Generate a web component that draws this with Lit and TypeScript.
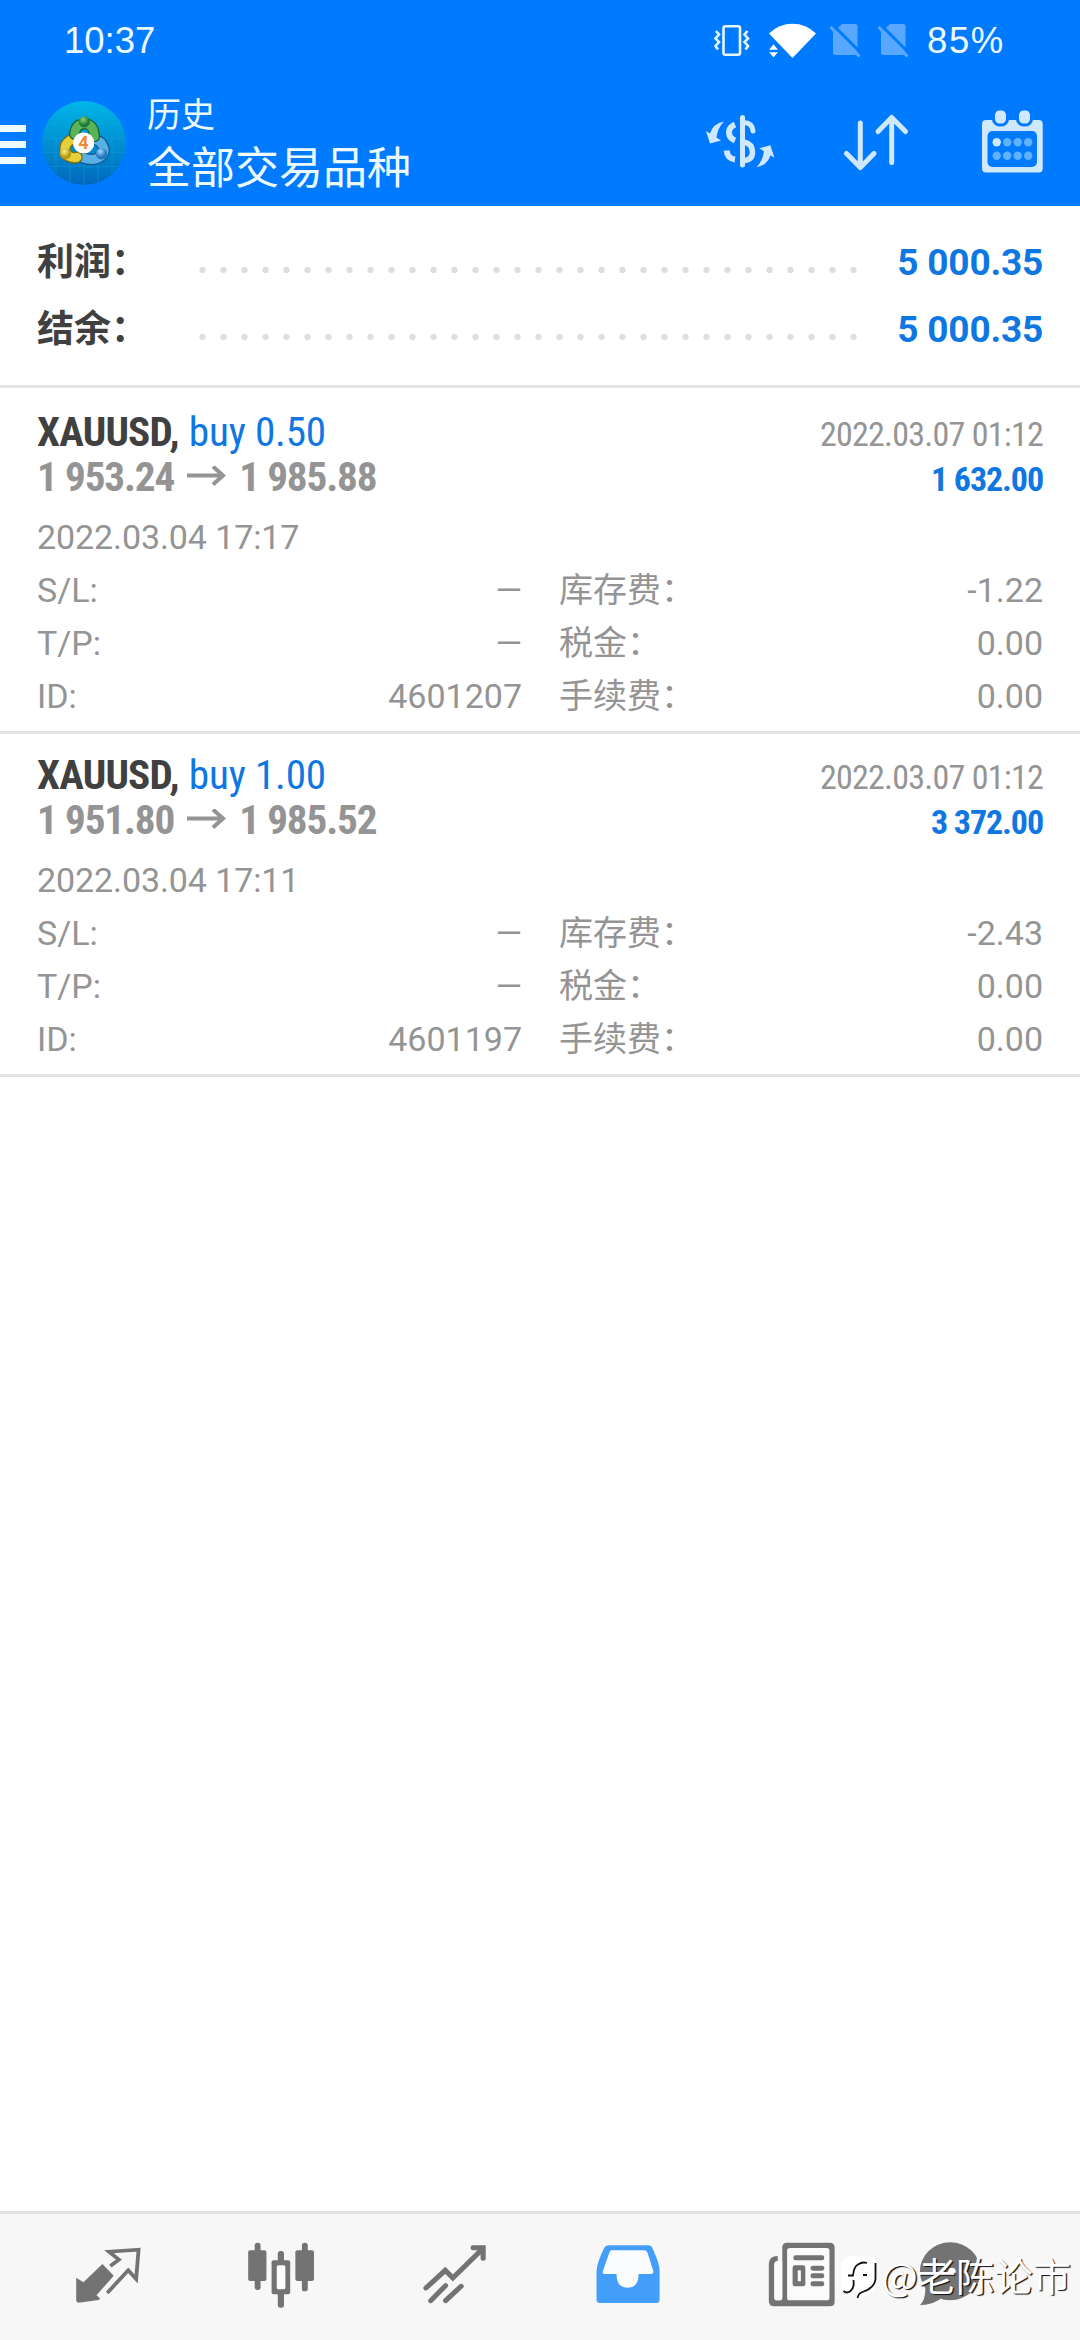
import { LitElement, html, css } from "lit";
import { customElement } from "lit/decorators.js";

interface Deal {
  symbol: string;
  side: string;
  open: string;
  close: string;
  closedAt: string;
  openedAt: string;
  profit: string;
  id: string;
  swap: string;
}

const DEALS: Deal[] = [
  { symbol: "XAUUSD,", side: "buy 0.50", open: "1 953.24", close: "1 985.88", closedAt: "2022.03.07 01:12", openedAt: "2022.03.04 17:17", profit: "1 632.00", id: "4601207", swap: "-1.22" },
  { symbol: "XAUUSD,", side: "buy 1.00", open: "1 951.80", close: "1 985.52", closedAt: "2022.03.07 01:12", openedAt: "2022.03.04 17:11", profit: "3 372.00", id: "4601197", swap: "-2.43" },
];

const statusIcons = html`
  <svg width="200" height="40" viewBox="710 20 200 40">
    <g fill="none" stroke="#e6f6ff" stroke-width="2.6">
      <rect x="723.5" y="26.3" width="16.5" height="28.4" rx="2"/>
      <path d="M716 31l3 3.500-3.500 4 3.500 3.500-3.500 4 2.500 3.500M747.500 31l-3 3.500 3.500 4-3.500 3.500 3.500 4-2.500 3.500"/>
    </g>
    <path fill="#fff" d="M769 33.5q10-9.7 23.5-9.7t23.5 9.7L792.5 58z"/>
    <path fill="#fff" stroke="#007aff" stroke-width="1.5" d="M767.5 50.5l6-7.5 6 7.5zM767.5 51.5h12l-6 7z"/>
    <g id="sim">
      <path fill="#58a8ff" d="M842 24h13.5q2 0 2 2v27q0 2-2 2h-20.5q-2 0-2-2V32z"/>
      <path stroke="#007aff" stroke-width="3" d="M832 24l30 30"/>
      <path stroke="#58a8ff" stroke-width="3" d="M830.5 27l29 29.500"/>
    </g>
    <use href="#sim" x="48"/>
  </svg>`;

const avatar = html`
  <svg class="avatar" width="84" height="84" viewBox="42 100.7 84 84">
    <defs>
      <linearGradient id="sky" x1="0" y1="0" x2="0" y2="1"><stop offset="0" stop-color="#00b7e8"/><stop offset="0.5" stop-color="#0090d2"/><stop offset="1" stop-color="#0068bb"/></linearGradient>
      <radialGradient id="gr" cx="0.4" cy="0.3"><stop offset="0" stop-color="#8fd07a"/><stop offset="1" stop-color="#1c7a35"/></radialGradient>
      <radialGradient id="ye" cx="0.4" cy="0.3"><stop offset="0" stop-color="#fff08a"/><stop offset="1" stop-color="#b89a10"/></radialGradient>
      <radialGradient id="bl" cx="0.4" cy="0.3"><stop offset="0" stop-color="#a5dcff"/><stop offset="1" stop-color="#2278bd"/></radialGradient>
    </defs>
    <circle cx="84" cy="142.7" r="42" fill="url(#sky)"/>
    <path d="M56 112v61M70 104v78M84 102v82M98 104v78M112 112v61M46 124h76M43 138h82M43 152h82M49 166h70" stroke="#1fa6dc" stroke-width="0.7" opacity="0.5"/>
    <g fill="none" stroke-linecap="round">
      <path d="M84 158q10 3 17-2 5-5 2-10-2-5-6-6" stroke="#17598f" stroke-width="11.500"/>
      <path d="M84 158q10 3 17-2 5-5 2-10-2-5-6-6" stroke="#58b0e6" stroke-width="9"/>
      <path d="M72 139q-6 3-7 8-1 7 4 9 4 2 8 1" stroke="#7b6b10" stroke-width="11.500"/>
      <path d="M72 139q-6 3-7 8-1 7 4 9 4 2 8 1" stroke="#e5d03c" stroke-width="9"/>
      <path d="M74.500 134q1-10 9.500-10.500 10 0 10.500 13" stroke="#155f2c" stroke-width="11"/>
      <path d="M74.500 134q1-10 9.500-10.500 10 0 10.500 13" stroke="#5ab457" stroke-width="8.500"/>
    </g>
    <circle cx="84.3" cy="121.5" r="5.6" fill="url(#gr)"/>
    <circle cx="65.5" cy="153.5" r="5.6" fill="url(#ye)"/>
    <circle cx="101.5" cy="153.5" r="5.6" fill="url(#bl)"/>
    <circle cx="83.7" cy="142.7" r="10.6" fill="#fff"/>
    <text x="83.5" y="149.200" text-anchor="middle" font-size="18" font-weight="700" fill="#f08a30">4</text>
  </svg>`;

const dollarIcon = html`
  <svg width="72" height="60" viewBox="704 112 72 60">
    <g fill="none" stroke="#cfe8fb">
      <path d="M742.5 117.5V165" stroke-width="5" stroke-linecap="round"/>
      <path d="M744 122.5q8.5.5 9 8.5" stroke-width="5" stroke-linecap="round"/>
      <path d="M735 124.5q-6 2.5-6 8t6 8" stroke-width="6"/>
      <path d="M726.5 150.5q1 8 8.5 9" stroke-width="6"/>
      <path d="M744 142q8.5 2 8.5 10t-8.5 8.5" stroke-width="5.5"/>
    </g>
    <path id="curl" fill="#cfe8fb" d="M706 131l4 12.5 11-3-4.5-3q1-9.5 7.5-16-11 2-14 12z"/>
    <use href="#curl" transform="rotate(180 740.2 144.4)"/>
  </svg>`;

const sortIcon = html`
  <svg class="sort" width="68" height="60" viewBox="842 112 68 60">
    <path d="M860.3 123v44.5M846.5 153.5l13.8 14 13.7-14M891.7 162.5V118M878 131.500l13.7-14 13.8 14" fill="none" stroke="#cfe8fb" stroke-width="5" stroke-linecap="round" stroke-linejoin="round"/>
  </svg>`;

const calendarIcon = html`
  <svg width="65" height="66" viewBox="980 109 65 66">
    <rect x="982" y="120" width="60.7" height="52.6" rx="4" fill="#cfe8fb"/>
    <rect x="987.5" y="131" width="49.5" height="36" rx="5" fill="#007aff"/>
    <g fill="#cfe8fb" stroke="#007aff" stroke-width="3">
      <rect x="993.5" y="109" width="14" height="16" rx="6"/><rect x="1017.5" y="109" width="14" height="16" rx="6"/>
    </g>
    <g fill="#5fb2ff">
      <circle cx="996.7" cy="142.3" r="4.2" fill="#cfe8fb"/><circle cx="1007.2" cy="142.3" r="4.2"/><circle cx="1017.7" cy="142.3" r="4.2"/><circle cx="1028.2" cy="142.3" r="4.2"/>
      <circle cx="996.7" cy="155.7" r="4.2"/><circle cx="1007.2" cy="155.7" r="4.2"/><circle cx="1017.7" cy="155.7" r="4.2"/><circle cx="1028.2" cy="155.7" r="4.2"/>
    </g>
  </svg>`;

const tab = (x: number, art: unknown, last = false) => html`
  <div class="tab ${last ? "last" : ""}">
    <svg width="75.8" height="73.3" viewBox="${x} 110 220 220" preserveAspectRatio="none">${art}</svg>
  </div>`;

/* Tab artwork is wrapped in its own svg so the fragments parse in the SVG namespace. */
const quotes = html`<svg x="202" y="110" width="220" height="220" viewBox="202 110 220 220" fill="#737373">
  <path d="M220 232l21 14 55-55 33 35-50 59 11 10-5 4-58 8q-7 0-7-7z"/>
  <path d="M319 197l25-19-29-24 86-6-7 88-23-26-61 68" fill="none" stroke="#737373" stroke-width="11"/></svg>`;
const charts = html`<svg x="703" y="110" width="220" height="220" viewBox="703 110 220 220" fill="#737373">
  <rect x="718" y="150" width="53" height="92" rx="6"/><rect x="737" y="127" width="17" height="142" rx="8"/>
  <rect x="855" y="150" width="54" height="92" rx="6"/><rect x="874" y="127" width="17" height="146" rx="8"/>
  <rect x="804" y="152" width="18" height="170" rx="8"/><rect x="786" y="180" width="54" height="102" rx="6"/>
  <rect x="801" y="195" width="25" height="72" rx="5" fill="#fcfcfc"/></svg>`;
const trade = html`<svg x="1206" y="110" width="220" height="220" viewBox="1206 110 220 220">
  <path d="M1232 263l56-53 22 23 86-87M1369 142.5h29V174M1246 301l43-45M1289 301l45-43" fill="none" stroke="#737373" stroke-width="15" stroke-linecap="round"/></svg>`;
const history = html`<svg x="143" y="110" width="220" height="220" viewBox="143 110 220 220">
  <path fill="#439dfb" d="M196 135h116q8 0 13 10 20 45 20 67v87q0 9-10 9H172q-10 0-10-9v-87q2-27 22-69 4-8 12-8z"/>
  <path fill="#fbfcfd" d="M207 150h92q8 0 11 7l17 56q1 8-7 8h-36q0 41-32 41t-32-41h-34q-8 0-6-8l19-56q2-7 8-7z"/></svg>`;
const news = html`<svg x="650" y="110" width="220" height="220" viewBox="650 110 220 220" fill="#737373">
  <path d="M690 167v15q-10 0-10 12v98q0 8 8 8h7q8 0 8-8V141q0-14 14-14h124q14 0 14 14v163q0 14-14 14H680q-16 0-16-16V190q0-23 26-23z"/>
  <path fill="#fbfbfb" d="M690 182q-10 0-10 12v98q0 8 8 8h7q8 0 8-8V182z"/>
  <rect x="717" y="143" width="123" height="157" rx="8" fill="#fbfbfb"/>
  <rect x="735" y="165" width="90" height="15" rx="7"/><rect x="733" y="195" width="37" height="63" rx="7"/>
  <rect x="748" y="210" width="9" height="33" fill="#fbfbfb"/>
  <rect x="785" y="196" width="40" height="15" rx="7"/><rect x="785" y="219" width="40" height="15" rx="7"/><rect x="785" y="243" width="40" height="15" rx="7"/></svg>`;
const chat = html`<svg x="1080" y="110" width="220" height="220" viewBox="1080 110 220 220" fill="#737373">
  <ellipse cx="1191" cy="213" rx="88" ry="87"/><path d="M1118 255q4 40-15 60 42-2 66-24z"/>
  <ellipse cx="1196" cy="213" rx="11" ry="11" fill="#fff"/></svg>`;

@customElement("app-root")
export class AppRoot extends LitElement {
  static styles = css`
    :host { display: block; width: 1080px; height: 2340px; font-family: Roboto, "Noto Sans CJK SC", sans-serif; }
    svg { display: block; flex: none; }
    .screen { position: relative; display: flex; flex-direction: column; height: 2340px; background: #fff; overflow: hidden; }
    .header { height: 206px; background: #007aff; color: #ecfaff; }
    .status { display: flex; align-items: center; height: 80px; padding: 0 70px 0 64px; font: 36.5px/42px "Liberation Sans", sans-serif; }
    .status .clock { padding-top: 2px; }
    .status .icons { margin-left: auto; }
    .status .battery { width: 83px; margin-left: 17px; padding-top: 2px; letter-spacing: 1.6px; }
    .bar { display: flex; align-items: center; height: 124px; }
    .menu { display: flex; flex-direction: column; gap: 9px; width: 26px; padding-top: 5px; }
    .menu i { height: 7px; background: #ecfaff; }
    .avatar { margin: 2px 0 0 16px; }
    .titles { margin-left: 21px; width: 557px; padding-top: 5px; }
    .sub { font-size: 34px; line-height: 48px; }
    .title { font-size: 44px; line-height: 60px; }
    .sort { margin: 0 70px 0 66px; }
    .summary { display: flex; flex-direction: column; padding: 23px 37px 22px; border-bottom: 3px solid #e4e4e4; font-weight: 700; }
    .sumrow { display: flex; height: 67px; align-items: center; font-size: 37px; line-height: 67px; }
    .sumrow .name { width: 162px; color: #404040; }
    .dots { width: 672px; height: 8px; margin-top: 14px; margin-right: auto; background: radial-gradient(circle at 3.5px 4px, #dedede 2.8px, transparent 3.6px) 0 0 / 21px 8px repeat-x; }
    .sumrow .amount { color: #0f77e2; letter-spacing: -0.2px; }
    .deals { display: flex; flex-direction: column; padding-top: 3px; flex: 1; }
    .deal { display: flex; flex-direction: column; height: 343px; padding: 19px 37px 0; border-bottom: 3px solid #e4e4e4; box-sizing: border-box; }
    .line { display: flex; height: 45px; align-items: baseline; font-size: 41.2px; line-height: 45px; font-stretch: 75%; white-space: nowrap; }
    .symbol { font-weight: 700; color: #404040; letter-spacing: -0.8px; }
    .side { color: #0f77e2; margin-left: 10px; letter-spacing: -0.2px; }
    .price { font-weight: 700; color: #949494; letter-spacing: -1.15px; }
    .closed { font-size: 34px; color: #949494; margin-left: auto; letter-spacing: -0.75px; }
    .profit { font-size: 34px; font-weight: 700; color: #0f77e2; margin-left: auto; letter-spacing: -1.1px; }
    .arrow { margin: 0 13px 0 13px; }
    .opened { height: 53px; margin-top: 11px; font-size: 34px; line-height: 53px; color: #949494; letter-spacing: -0.1px; }
    .grid { display: grid; grid-template-columns: 485px 484px; column-gap: 37px; color: #949494; font-size: 34px; line-height: 53px; }
    .cell { display: flex; justify-content: space-between; height: 53px; }
    .nav { display: flex; height: 126px; padding-left: 20.7px; background: #f7f7f7; border-top: 3px solid #e2e2e2; }
    .tab { display: flex; justify-content: center; width: 173.5px; padding-top: 22.7px; }
    .tab.last { width: 123px; }
    .mark { position: absolute; right: 9px; bottom: 38px; display: flex; align-items: center; gap: 4px; color: #fff; font: 38.3px/54px "Noto Sans CJK SC", sans-serif; text-shadow: 1.3px 1.3px 0.8px #111; }
    .note { margin-top: 6px; }
  `;

  private sumRow(name: string, amount: string) {
    return html`<div class="sumrow"><span class="name">${name}</span><span class="dots"></span><span class="amount">${amount}</span></div>`;
  }

  private deal(d: Deal) {
    const cell = (k: string, v: string) => html`<div class="cell"><span>${k}</span><span>${v}</span></div>`;
    return html`<section class="deal">
      <div class="line">
        <span class="symbol">${d.symbol}</span><span class="side">${d.side}</span><span class="closed">${d.closedAt}</span>
      </div>
      <div class="line">
        <span class="price">${d.open}</span>
        <svg class="arrow" width="39" height="25" viewBox="0 0 39 25"><path d="M0 9.5H36M26 0.5l10 9-10 9" fill="none" stroke="#949494" stroke-width="4"/></svg>
        <span class="price">${d.close}</span><span class="profit">${d.profit}</span>
      </div>
      <div class="opened">${d.openedAt}</div>
      <div class="grid">
        ${cell("S/L:", "—")}${cell("库存费：", d.swap)}
        ${cell("T/P:", "—")}${cell("税金：", "0.00")}
        ${cell("ID:", d.id)}${cell("手续费：", "0.00")}
      </div>
    </section>`;
  }

  render() {
    return html`<div class="screen">
      <header class="header">
        <div class="status"><span class="clock">10:37</span><span class="icons">${statusIcons}</span><span class="battery">85%</span></div>
        <div class="bar">
          <div class="menu"><i></i><i></i><i></i></div>
          ${avatar}
          <div class="titles"><div class="sub">历史</div><div class="title">全部交易品种</div></div>
          ${dollarIcon}${sortIcon}${calendarIcon}
        </div>
      </header>
      <div class="summary">${this.sumRow("利润：", "5 000.35")}${this.sumRow("结余：", "5 000.35")}</div>
      <main class="deals">${DEALS.map((d) => this.deal(d))}</main>
      <nav class="nav">
        ${tab(202, quotes)}${tab(703, charts)}${tab(1206, trade)}${tab(143, history)}${tab(650, news)}${tab(1080, chat, true)}
      </nav>
      <div class="mark">
        <svg class="note" width="38" height="46" viewBox="0 0 38 46">
          <path fill="#fff" d="M10 1h18q8 0 8 9v17q0 9-9 13l-8 4-3-3 2-5q-3 1-5 0-3 3-8 2-4-2-4-7V12Q1 2 10 1z"/>
          <path fill="none" stroke="#111" stroke-width="1.8" d="M35.500 8v16q-1 9-13 13-4 1-5 6M8 20.500h5q1-9 5-11 4-3 9-1.500M13.500 25q1 8-3 11-4 3-7 0M23 20h4"/>
        </svg>
        <span>@老陈论市</span>
      </div>
    </div>`;
  }
}
